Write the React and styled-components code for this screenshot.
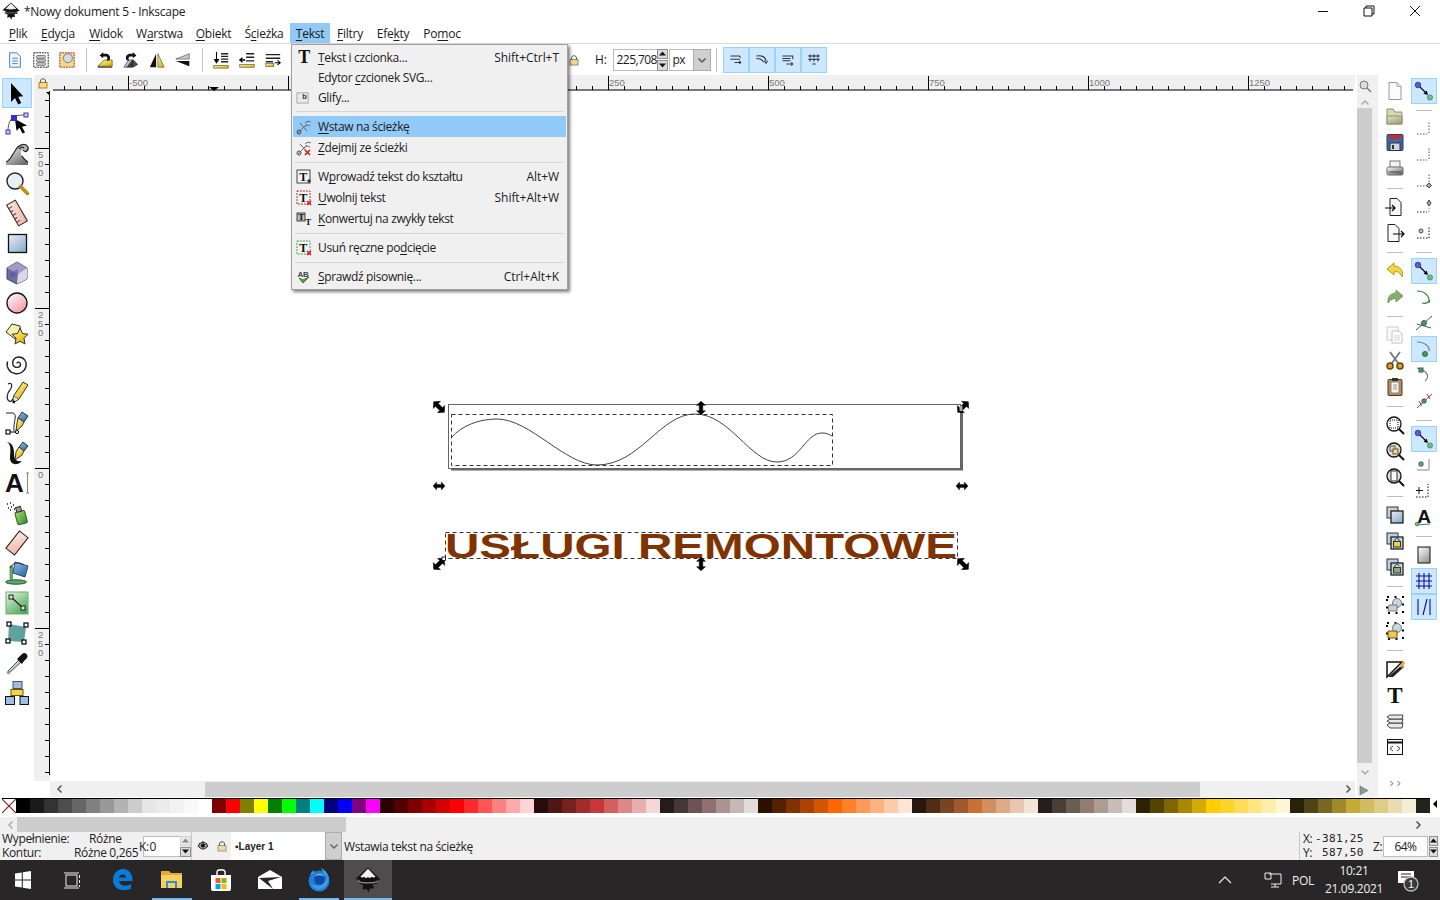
import React from "react";
import styled, { createGlobalStyle } from "styled-components";

const Global = createGlobalStyle`
  html, body { margin: 0; padding: 0; width: 1440px; height: 900px; overflow: hidden; background: #fff; }
  body { font-family: "Open Sans", "Noto Sans", sans-serif; font-size: 12px; color: #1a1a1a; }
  u { text-decoration-thickness: 1px; text-underline-offset: 2px; text-decoration-skip-ink: none; }
`;

/* ---------- layout ---------- */
const Window = styled.div`position: relative; width: 1440px; height: 900px; display: flex; flex-direction: column; overflow: hidden;`;
const TitleBar = styled.div`height: 22px; display: flex; align-items: center; padding-left: 2px; background: #fff;`;
const TitleText = styled.span`margin-left: 4px; letter-spacing: -0.26px; color: #222;`;
const WinControls = styled.div`margin-left: auto; display: flex; margin-right: 2px;`;
const WinControl = styled.div`width: 46px; height: 22px; display: flex; align-items: center; justify-content: center;`;
const MenuBar = styled.div`height: 21px; display: flex; padding-left: 2px; border-bottom: 1px solid #d9d9d9; background: #fff;`;
const MenuItem = styled.div`
  width: ${p => p.$w}px; height: 20px; margin-top: 1px; display: flex; align-items: center; justify-content: center;
  letter-spacing: -0.25px; background: ${p => (p.$open ? "#91c9f7" : "transparent")};
`;
const TopBar = styled.div`height: 31px; display: flex; align-items: center; padding-left: 2px; background: #fff;`;
const Btn = styled.div`
  width: ${p => p.$w || 26}px; height: ${p => p.$h || 26}px; flex: none; box-sizing: border-box;
  display: flex; align-items: center; justify-content: center;
  background: ${p => (p.$on ? "#cce8ff" : "transparent")};
  border: 1px solid ${p => (p.$on ? "#99d1ff" : "transparent")};
`;
const VSep = styled.div`width: 12px; height: 24px; flex: none; display: flex; justify-content: center; &::before { content: ""; width: 1px; background: #c4c4c4; }`;
const Gap = styled.div`width: ${p => p.$w}px; flex: none;`;
const FieldLabel = styled.span`letter-spacing: -0.2px; flex: none;`;
const NumField = styled.div`
  width: ${p => p.$w}px; height: ${p => p.$h || 22}px; flex: none; box-sizing: border-box; background: #fff; border: 1px solid #bdbdbd; border-right: ${p => (p.$open ? "0" : "1px solid #bdbdbd")};
  display: flex; align-items: center; justify-content: ${p => (p.$center ? "center" : "flex-start")}; padding-left: ${p => (p.$center ? 0 : 3)}px; letter-spacing: -0.6px; white-space: pre;
`;
const Spin = styled.div`width: ${p => p.$w || 11}px; height: ${p => p.$h || 22}px; flex: none; display: flex; flex-direction: column; gap: 1px;`;
const SpinPart = styled.div`flex: 1; background: ${p => (p.$dim ? "#e6e6e6" : "#dcdcdc")}; border: 1px solid ${p => (p.$dim ? "#d4d4d4" : "#8f8f8f")}; display: flex; align-items: center; justify-content: center;`;
const ComboArrow = styled.div`width: ${p => p.$w}px; height: ${p => p.$h}px; flex: none; box-sizing: border-box; background: #cfcfcf; border: 1px solid #adadad; display: flex; align-items: center; justify-content: center;`;

const Workspace = styled.div`height: 722px; display: flex; background: #fff;`;
const LeftTools = styled.div`width: 34px; flex: none; padding: 3px 0 0 2px; box-sizing: border-box; display: flex; flex-direction: column;`;
const Center = styled.div`
  width: 1344px; flex: none; box-sizing: border-box; border-right: 1px solid #b4b4b4; display: grid;
  grid-template-columns: 16px 1305px 23px; grid-template-rows: 16px 690px 16px;
`;
const Corner = styled.div`background: #f0f0f0; display: flex; align-items: flex-start; justify-content: flex-end; padding: 2px 1px 0 0;`;
const RulerTop = styled.div`background: #f0f0f0; height: 16px; overflow: hidden;`;
const RulerLeft = styled.div`background: #f0f0f0; width: 16px; overflow: hidden;`;
const Canvas = styled.div`background: #fff; height: 690px; overflow: hidden;`;
const VScroll = styled.div`grid-row: 1 / span 2; grid-column: 3; background: #f0f0f0; margin-left: 2px; display: flex; flex-direction: column; align-items: stretch;`;
const VScrollEnd = styled.div`height: ${p => p.$h}px; flex: none; width: 15px; display: flex; align-items: center; justify-content: center;`;
const VThumb = styled.div`width: 15px; height: 655px; flex: none; background: #cdcdcd;`;
const BottomLeft = styled.div`background: #fff;`;
const HScroll = styled.div`display: flex; align-items: center; background: #f0f0f0; grid-column: 2;`;
const HThumb = styled.div`width: ${p => p.$w}px; height: ${p => p.$h || 15}px; margin-left: ${p => p.$l}px; background: #cdcdcd; flex: none;`;
const Arrow = styled.div`width: ${p => p.$w || 10}px; margin-left: ${p => p.$l || 0}px; flex: none; display: flex; align-items: center; justify-content: center;`;
const CornerBR = styled.div`background: #f0f0f0; margin-left: 2px; display: flex; align-items: flex-end; padding: 0 0 1px 2px;`;
const RightBars = styled.div`flex: 1; display: flex;`;
const CmdBar = styled.div`width: 33px; flex: none; padding-top: 3px; display: flex; flex-direction: column; align-items: center;`;
const SnapBar = styled.div`width: 26px; flex: none; padding-top: 3px; display: flex; flex-direction: column;`;
const HSep = styled.div`height: 12px; flex: none; display: flex; align-items: center; justify-content: center; &::before { content: ""; width: 16px; height: 1px; background: #bdbdbd; }`;
const More = styled.div`height: 24px; margin-top: 11px; display: flex; align-items: center; justify-content: center;`;

const PaletteRow = styled.div`height: 20px; flex: none; box-sizing: border-box; padding: 1px 0 0 2px; background: #fff; display: flex; align-items: flex-start;`;
const Swatches = styled.div`display: flex; border-top: 1px solid #000;`;
const Swatch = styled.div`width: 14px; height: 14px; background: ${p => p.$c};`;
const NoneSwatch = styled.div`width: 14px; height: 14px; overflow: hidden; display: flex;`;
const PaletteMenu = styled.div`margin: 2px 0 0 0; width: 10px; display: flex; justify-content: center;`;
const PaletteScroll = styled.div`height: 15px; flex: none; background: #f0f0f0; display: flex; align-items: center; padding-left: 4px;`;

const Status = styled.div`height: 28px; flex: none; background: #f0f0f0; display: flex; align-items: center; letter-spacing: -0.35px; font-size: 12px; color: #222;`;
const FillInfo = styled.div`width: 139px; flex: none; padding-left: 2px; box-sizing: border-box; display: grid; grid-template-columns: 72px 1fr; line-height: 14px; white-space: nowrap;`;
const FirstValue = styled.span`padding-left: 15px;`;
const OpacityLabel = styled.span`width: 4px; flex: none; position: relative; z-index: 1; overflow: visible; white-space: nowrap;`;
const StatusSep = styled.div`width: 1px; height: 28px; background: #c8c8c8; flex: none;`;
const StatusIcon = styled.div`width: ${p => p.$w}px; flex: none; display: flex; justify-content: center;`;
const LayerBox = styled.div`width: 94px; height: 28px; flex: none; background: #fff; box-sizing: border-box; padding-left: 4px; display: flex; align-items: center; font: bold 10px "Liberation Sans", sans-serif; letter-spacing: 0;`;
const Message = styled.span`margin-left: 2px;`;
const Coords = styled.div`margin-left: auto; width: 74px; flex: none; padding-left: 3px; box-sizing: border-box; border-left: 1px solid #c8c8c8; height: 28px; display: flex; flex-direction: column; justify-content: center;`;
const CoordRow = styled.div`display: flex; white-space: pre; height: 14px; line-height: 14px;`;
const CoordKey = styled.span`width: 12px; flex: none;`;
const CoordVal = styled.span`font-family: "DejaVu Sans Mono", monospace; font-size: 11px; line-height: 14px; letter-spacing: 0.35px;`;
const ZoomLabel = styled.span`width: 10px; flex: none;`;
const EndPad = styled.div`width: 2px; flex: none;`;

const Taskbar = styled.div`height: 40px; flex: none; background: #282627; display: flex; color: #eee;`;
const TaskBtn = styled.div`
  width: 48px; height: 40px; flex: none; position: relative; margin-left: ${p => p.$ml || 0}px; display: flex; align-items: center; justify-content: center;
  background: ${p => (p.$active ? "#4e4c4d" : "transparent")};
  ${p => p.$run && `&::after { content: ""; position: absolute; bottom: 0; height: 2px; left: ${p.$active ? 0 : 4}px; right: ${p.$active ? 0 : 4}px; background: #76b9ed; }`}
`;
const Tray = styled.div`margin-left: auto; display: flex; align-items: center; height: 40px; color: #f0f0f0; font-size: 12px;`;
const TrayItem = styled.div`width: ${p => p.$w}px; flex: none; display: flex; align-items: center; justify-content: center; letter-spacing: -0.2px;`;
const Clock = styled.div`width: 82px; flex: none; display: flex; flex-direction: column; align-items: center; line-height: 18px; letter-spacing: -0.3px;`;

const DropMenu = styled.div`
  position: absolute; left: 291px; top: 44px; width: 277px; height: 246px; box-sizing: border-box; z-index: 5; background: #f0f0f0;
  border: 1px solid #a0a0a0; padding: 2px 1px; box-shadow: 2px 2px 3px rgba(0,0,0,.5); letter-spacing: -0.36px; color: #1c1c1c;
`;
const MenuRow = styled.div`height: ${p => p.$h}px; display: flex; align-items: center; background: ${p => (p.$hot ? "#91c9f7" : "transparent")};`;
const MenuIcon = styled.div`width: 25px; padding-left: 3px; box-sizing: border-box; flex: none; display: flex; align-items: center; justify-content: flex-start;`;
const MenuLabel = styled.span`flex: 1; white-space: nowrap;`;
const MenuKey = styled.span`margin-right: 7px; white-space: nowrap; letter-spacing: -0.05px;`;
const MenuSep = styled.div`height: ${p => p.$h}px; display: flex; align-items: center; padding: 0 2px; &::before { content: ""; flex: 1; height: 1px; background: #d7d7d7; }`;
const IconSvg = styled.svg`width: ${p => p.$s}px; height: ${p => p.$s}px; flex: none; display: block; overflow: visible;`;
const HiddenDefs = styled.svg`position: absolute; width: 0; height: 0;`;
const FlatSvg = styled.svg`display: block; flex: none;`;

/* ---------- icons ---------- */
const I = ({ s = 20, v = 20, children }) => <IconSvg $s={s} viewBox={`0 0 ${v} ${v}`}>{children}</IconSvg>;
const SANS = "Liberation Sans, sans-serif";
const SERIF = "Liberation Serif, serif";

const Defs = () => (
  <HiddenDefs>
    <defs>
      {[
        ["gBlue", "#e9f0f6", "#8eb0cd"], ["gPink", "#ffffff", "#f49aaa"], ["gYel", "#fff7a0", "#e2b400"],
        ["gGreen", "#eaf7e6", "#4ea85a"], ["gGray", "#ffffff", "#6e6e6e"], ["gSalmon", "#fdeae4", "#f3b9ab"],
        ["gBucket", "#8fc0e6", "#2f6ea6"], ["gBottle", "#a8dc70", "#3f9a35"], ["gOrange", "#ffd27a", "#c8781c"],
        ["gPage", "#ffffff", "#9a9a9a"], ["gFolder", "#e3e6c2", "#9ea27a"],
      ].map(([id, a, b]) => (
        <linearGradient key={id} id={id} x1="0" y1="0" x2="0.7" y2="1"><stop offset="0" stopColor={a} /><stop offset="1" stopColor={b} /></linearGradient>
      ))}
    </defs>
  </HiddenDefs>
);

const Tools = {
  select: <path d="M6 2v19l4-4 3.200 6.500 3-1.500-3-6.200 5-.5z" fill="#000" />,
  node: <><path d="M3 20C3 12 6 7 9 6c3-2 7-2 11-2" fill="none" stroke="#555" /><path d="M10 8l12 6.500-5 1.200 3 5.800-2.500 1-3-5.800-3 3z" fill="#000" /><rect x="1" y="19" width="4" height="4" fill="#cfcff5" stroke="#3434c0" /><rect x="6.500" y="4.500" width="5" height="5" fill="#3434c0" stroke="#3434c0" /><rect x="19" y="2" width="4" height="4" fill="#cfcff5" stroke="#3434c0" /></>,
  tweak: <><path d="M1 24v-3c4-1 6-7 9-11 3-6 10-9 13-4 1 4-3 6-5 3-2 0-3 3-1 6 2 4 5 5 6 6v3z" fill="url(#gGray)" /><path d="M1 21c4-1 6-7 9-11 3-6 10-9 13-4 1 4-3 6-5 3M14 8c2-2 4-2 5-1M17 15c2 4 5 5 6 6" fill="none" stroke="#222" strokeWidth="1.200" /></>,
  zoom: <><circle cx="10" cy="10" r="8" fill="#e8f0f6" stroke="#222" strokeWidth="1.400" /><path d="M15.500 15.500l7 7" stroke="#c98a16" strokeWidth="3.600" strokeLinecap="round" /></>,
  measure: <g transform="rotate(-30 12 12)"><rect x="7" y="0" width="10" height="24" fill="url(#gSalmon)" stroke="#222" /><path d="M7 4h4M7 8h3M7 12h4M7 16h3M7 20h4" stroke="#444" /></g>,
  rect: <rect x="3.500" y="3.500" width="18" height="18" fill="url(#gBlue)" stroke="#111" strokeWidth="1.300" />,
  box: <><path d="M12 1l10 6v11l-10 5-10-5V7z" fill="#6d6da8" stroke="#444" /><path d="M12 1l10 6-9 6-11-6z" fill="#9d9dc8" /><path d="M13 13l9-6v11l-10 5z" fill="#d8d8ea" /><path d="M5 17l8-4v-5l-8 4z" fill="#55558f" opacity=".5" /></>,
  circle: <circle cx="12" cy="12" r="10" fill="url(#gPink)" stroke="#111" strokeWidth="1.300" />,
  star: <><path d="M1 11l6-8 8 2 1 7-6 6z" fill="#f7f1b0" stroke="#333" /><path d="M15 7l2.500 5.500 5.500.7-4 4 1 5.800-5-2.800-5 2.800 1-5.800-4-4 5.500-.7z" fill="url(#gYel)" stroke="#333" /></>,
  spiral: <path d="M12 12.500c0-2 3.500-2 3.500 1 0 3.500-6 4-7.500.5-1.500-4 1.500-8 5.500-8 5.500 0 8.500 4.500 7.500 9.500-1 5-6 8-11 7-5.500-1-9-6-7.500-12" fill="none" stroke="#222" strokeWidth="1.400" />,
  pencil: <><path d="M3 3c4-2 5 2 2 6-3 3-4 9-1 11 3 2 3-3 5-2 1 1-1 4 1 4" fill="none" stroke="#222" strokeWidth="1.200" /><path d="M18 1l5 3-9 14-6 4 .5-7z" fill="url(#gYel)" stroke="#333" /><path d="M8.500 15l-.5 7 6-4z" fill="#f4e0c0" stroke="#333" strokeWidth=".6" /><path d="M8.200 19l-.2 3 2.500-1.600z" fill="#000" /></>,
  pen: <><path d="M1 2h7c5 2 0 9 1 18" fill="none" stroke="#222" /><rect x="1" y="19" width="4" height="4" fill="#fff" stroke="#000" strokeWidth="1.100" /><path d="M5 21h6" stroke="#000" /><circle cx="12" cy="21" r="1.600" fill="#fff" stroke="#000" /><path d="M17 1l6 4-4 6-6-4z" fill="url(#gBucket)" stroke="#333" /><path d="M13 7l6 4-2 4-6 5 1-8z" fill="url(#gYel)" stroke="#333" /></>,
  calli: <><path d="M2 1c5 3 3 11 3 17 1 6 7 7 12 2-6 1-8-2-8-8 0-6-2-10-7-11z" fill="#111" /><path d="M18 1l5 4-4 5-5-4z" fill="url(#gBucket)" stroke="#333" /><path d="M14 6l5 4-2 4-7 5 1-8z" fill="url(#gYel)" stroke="#333" /></>,
  text: <><text x="0" y="21" fontFamily={SANS} fontWeight="700" fontSize="26" fill="#111">A</text><path d="M21 2h3M22.500 2v20M21 22h3" stroke="#666" strokeWidth=".8" fill="none" /></>,
  spray: <><rect x="11" y="10" width="10" height="13" rx="2" fill="url(#gBottle)" stroke="#2d5d22" transform="rotate(-15 16 16)" /><rect x="11" y="6" width="5" height="5" fill="#999" stroke="#333" transform="rotate(-15 13 8)" /><path d="M2 3h1M5 2h1M8 4h1M3 7h1M6 6h1M9 8h1M5 9h1" stroke="#111" strokeWidth="1.600" /></>,
  eraser: <g transform="rotate(38 12 12)"><rect x="6.500" y="1" width="11" height="22" fill="url(#gSalmon)" stroke="#222" /></g>,
  bucket: <><ellipse cx="11" cy="21" rx="10.500" ry="2.200" fill="#5ca86a" stroke="#27552f" /><path d="M5 5h2.500v12c0 3-2.500 3-2.500 0z" fill="#5fb06a" stroke="#27552f" strokeWidth=".5" /><path d="M10 1l13 4-3 11-12-4z" fill="url(#gBucket)" stroke="#274f74" /><path d="M5 7c2-5 9-7 14-3" fill="none" stroke="#333" /></>,
  gradient: <><rect x="1" y="1" width="22" height="22" fill="url(#gGreen)" stroke="#63b56f" /><path d="M6 6l12 11" stroke="#222" strokeWidth="1.200" /><rect x="4" y="4" width="4" height="4" fill="#ddd" stroke="#222" /><rect x="16" y="15" width="4" height="4" fill="#ddd" stroke="#222" /></>,
  mesh: <><path d="M4 3l17 3-2 15-16-1z" fill="#5fa39c" /><g fill="#fff" stroke="#000" strokeWidth="1.200"><rect x="2" y="1" width="4" height="4" /><rect x="19" y="2" width="4" height="4" /><rect x="1" y="18" width="4" height="4" /><rect x="17" y="19" width="4" height="4" /></g></>,
  dropper: <><path d="M4 22l-1-2 11-11 2 2z" fill="#cfd8dd" stroke="#444" /><path d="M12 8l5 5 2-3 3-3c2-3-2-7-5-4l-3 3z" fill="#111" /><circle cx="3.500" cy="21.500" r="1.800" fill="#999" /></>,
  conn: <><path d="M12 9V6M7 19v-5h10v5" fill="none" stroke="#222" /><rect x="8" y="0.500" width="9" height="7" fill="#9fbde0" stroke="#456" /><rect x="6" y="8.500" width="12" height="6" fill="#f6d34a" stroke="#6a5a10" /><rect x="0.500" y="15.500" width="9" height="8" fill="#9fbde0" stroke="#111" /><rect x="15" y="15.500" width="8.500" height="8" fill="#9fbde0" stroke="#111" /></>,
};

const Top = {
  doc: <><path d="M4 2h8l4 4v12H4z" fill="#eef5fb" stroke="#3f78ae" /><path d="M7 8h6M7 11h6M7 14h6" stroke="#3f78ae" /></>,
  selAll: <><rect x="2" y="2" width="16" height="16" fill="none" stroke="#000" strokeDasharray="2 1" /><g fill="#c9c9c9" stroke="#555" strokeWidth=".8"><rect x="5" y="5" width="10" height="3" rx="1" /><rect x="5" y="9" width="10" height="3" rx="1" /><rect x="5" y="13" width="10" height="3" rx="1" /></g></>,
  invert: <><rect x="2" y="2" width="16" height="16" fill="#f5d98a" stroke="#a01818" strokeDasharray="2 1" /><circle cx="11" cy="8" r="5" fill="#cfdcea" stroke="#777" /></>,
  rotL: <><path d="M2 17l7-7h9v7z" fill="url(#gYel)" stroke="#222" strokeWidth=".6" /><path d="M8 1L4 5l4 3V6h3c2 0 2 3 1 5l3-1c2-4-1-7-4-7H8z" fill="#111" /><path d="M2 18h16" stroke="#111" /></>,
  rotR: <><path d="M2 18l5-8h5v8z" fill="#b8bdc3" stroke="#222" strokeWidth=".6" /><path d="M5 18h8l5-3-6-6z" fill="#111" opacity=".75" /><path d="M12 1l4 4-4 3V6H9C7 6 7 9 8 11l-3-1C3 6 6 3 9 3h3z" fill="#111" /></>,
  flipH: <><path d="M9 3v15H2z" fill="#111" /><path d="M11 3v15h7z" fill="url(#gYel)" stroke="#333" strokeWidth=".6" /></>,
  flipV: <><path d="M17 3v6H2z" fill="#c7c7c7" stroke="#333" strokeWidth=".6" /><path d="M17 11v6L2 11z" fill="#111" /></>,
  raiseTop: <><rect x="2" y="16" width="16" height="3" fill="url(#gYel)" stroke="#333" strokeWidth=".6" /><path d="M5 1v10M2.500 9l2.500 4 2.500-4" stroke="#000" fill="#000" strokeWidth="1.200" /><path d="M10 3h8M10 6h8M10 9h8M10 12h8" stroke="#222" strokeWidth="1.600" /></>,
  raise: <><rect x="2" y="15" width="16" height="3" fill="url(#gYel)" stroke="#333" strokeWidth=".6" /><path d="M2 10h6M5 7.500L2 10l3 2.500" stroke="#000" fill="none" strokeWidth="1.400" /><path d="M9 3h9M9 7h9M9 11h9" stroke="#222" strokeWidth="1.600" /></>,
  lower: <><path d="M2 4h16M2 8h16M2 12h8" stroke="#222" strokeWidth="1.600" /><rect x="2" y="14" width="9" height="3" fill="url(#gYel)" stroke="#333" strokeWidth=".6" /><path d="M12 13h6M15 10.500l3 2.500-3 2.500" stroke="#000" fill="none" strokeWidth="1.200" /></>,
};

const Cmd = {
  new: <><path d="M4 1.500h8l4 4v13H4z" fill="#fbfbfb" stroke="#999" /><path d="M12 1.500v4h4" fill="#e0e0e0" stroke="#aaa" /></>,
  open: <><path d="M2 5V2h6l2 3h7v12H2z" fill="#d6d9b0" stroke="#8f9272" /><path d="M2 9h15v8H2z" fill="url(#gFolder)" stroke="#8f9272" /></>,
  save: <><rect x="2" y="1.500" width="16" height="16" rx="1" fill="#3a68b0" stroke="#25406d" /><rect x="4" y="2" width="12" height="4" fill="#c92c2c" /><rect x="5" y="10" width="10" height="7.500" fill="#d5d5d5" stroke="#333" /><rect x="7" y="12" width="2" height="4" fill="#333" /></>,
  print: <><rect x="5" y="2" width="10" height="7" fill="#f2f2f2" stroke="#777" /><rect x="2" y="8" width="16" height="8" rx="1.500" fill="url(#gGray)" stroke="#666" /><path d="M4 13h12" stroke="#444" /></>,
  import: <><path d="M5 1.500h7l4 4v13H5z" fill="#fafafa" stroke="#222" /><path d="M0 11h10M7 8l3 3-3 3" stroke="#000" fill="none" strokeWidth="1.200" /></>,
  export: <><path d="M3 1.500h7l4 4v13H3z" fill="#fafafa" stroke="#222" /><path d="M8 11h11M16 8l3 3-3 3" stroke="#000" fill="none" strokeWidth="1.200" /></>,
  undo: <path d="M9 2L2 8l7 6v-3c3-1 6 0 8 5 2-6-2-11-8-11z" fill="#f3d545" stroke="#b99a10" />,
  redo: <path d="M11 3l7 6-7 6v-3C8 11 5 13 3 16 2 10 6 6 11 6z" fill="#86ae6d" stroke="#5d8b4a" strokeDasharray="1.500 .6" />,
  copy: <g opacity=".5"><rect x="2" y="2" width="11" height="13" fill="#f4f4f4" stroke="#999" /><path d="M7 6h7l3 3v9H7z" fill="#fff" stroke="#888" /><path d="M9 11h6M9 13h6M9 15h6" stroke="#aaa" /></g>,
  cut: <><path d="M5 1l8 11M15 1L7 12" stroke="#777" strokeWidth="1.800" /><circle cx="5" cy="15" r="3" fill="#d8a030" stroke="#6a4608" strokeWidth="1.500" /><circle cx="15" cy="15" r="3" fill="#d8a030" stroke="#6a4608" strokeWidth="1.500" /></>,
  paste: <><rect x="3" y="2.500" width="14" height="16" rx="1" fill="#b98c52" stroke="#52361a" /><path d="M6 5h8v11H6z" fill="#f5f5f5" stroke="#888" /><rect x="7" y="1" width="6" height="3" fill="#333" /><path d="M8 8h4M8 10h4M8 12h4" stroke="#999" /></>,
  zoomSel: <><circle cx="9" cy="9" r="7" fill="#fff" stroke="#111" strokeWidth="1.300" /><rect x="5" y="5" width="8" height="8" fill="none" stroke="#111" strokeDasharray="1 1" /><path d="M14 14l5 5" stroke="#111" strokeWidth="2" /></>,
  zoomDraw: <><circle cx="9" cy="9" r="7" fill="#ddd" stroke="#111" strokeWidth="1.300" /><rect x="5" y="5" width="5" height="5" fill="#f4d98a" stroke="#555" /><rect x="8" y="8" width="5" height="5" fill="#f4d98a" stroke="#555" /><path d="M14 14l5 5" stroke="#111" strokeWidth="2" /></>,
  zoomPage: <><circle cx="9" cy="9" r="7" fill="#ddd" stroke="#111" strokeWidth="1.300" /><rect x="6" y="4" width="6" height="10" fill="#fafafa" stroke="#333" /><path d="M14 14l5 5" stroke="#111" strokeWidth="2" /></>,
  dup: <><rect x="2" y="2" width="11" height="11" fill="#bcd0e2" stroke="#333" /><rect x="6" y="6" width="12" height="12" fill="url(#gBlue)" stroke="#111" strokeWidth="1.200" /></>,
  clone: <><rect x="2" y="2" width="11" height="11" fill="#bcd0e2" stroke="#333" /><rect x="6" y="6" width="12" height="12" fill="#c3d4e4" stroke="#111" strokeWidth="1.200" /><rect x="8.500" y="10.500" width="7" height="5.500" fill="#f2d23a" stroke="#333" /><path d="M10 10.500V9c0-2 4-2 4 0v1.500" fill="none" stroke="#333" /></>,
  unlink: <><rect x="2" y="2" width="11" height="11" fill="#bcd0e2" stroke="#333" /><rect x="6" y="6" width="12" height="12" fill="#c3d4e4" stroke="#111" strokeWidth="1.200" /><rect x="8.500" y="10.500" width="7" height="5.500" fill="#7fb070" stroke="#333" /><path d="M10 10.500V9c0-2 4-2 4 0" fill="none" stroke="#333" /></>,
  group: <><rect x="2" y="2" width="16" height="16" fill="none" stroke="#000" strokeWidth="2" strokeDasharray="2 5.500" /><circle cx="12" cy="8" r="4.500" fill="#c8d6e2" stroke="#777" /><path d="M3 16l1-6h8v6z" fill="#c6d2dc" stroke="#777" /></>,
  ungroup: <><rect x="2" y="2" width="16" height="16" fill="none" stroke="#000" strokeWidth="2" strokeDasharray="2 5.500" /><circle cx="12" cy="7" r="4.500" fill="#c8d6e2" stroke="#777" /><path d="M3 17V10h9v7z" fill="#f4c93a" stroke="#555" /></>,
  fill: <><path d="M2 18V3h15L2 18z" fill="#fff" stroke="#111" strokeWidth="1.500" /><path d="M3 18L17 6l2 2L8 18z" fill="#222" /><path d="M14 7l4-5 2 2-3 5z" fill="#e4a630" /></>,
  t: <text x="10" y="18" textAnchor="middle" fontFamily={SERIF} fontWeight="700" fontSize="23" fill="#111">T</text>,
  layers: <g fill="#e8e8e8" stroke="#333" strokeWidth=".9"><path d="M2 14l3-2h13l-1 5H5z" /><path d="M2 10l3-2h13l-1 4H5z" /><path d="M2 6l3-2h13l-1 4H5z" /></g>,
  xml: <><rect x="2.500" y="2.500" width="15" height="15" fill="#fafafa" stroke="#111" /><path d="M2.500 5.500h15" stroke="#111" strokeWidth="2" /><path d="M8 9l-3 2.500 3 2.500M12 9l3 2.500-3 2.500" fill="none" stroke="#444" /></>,
};

const N = ({ x, y, c, r = 2 }) => <circle cx={x} cy={y} r={r} fill={c} stroke={c === "#5b5bd0" ? "#2f2fa0" : "#3d8a5c"} strokeWidth=".8" />;
const DashL = <path d="M3 15h10M15 14V2" stroke="#555" strokeDasharray="1.500 1.500" fill="none" />;
const Snap = {
  on: <><path d="M6 6l7 7" stroke="#000" strokeWidth="1.100" /><path d="M14 14l-4.500-1.200 3.200-3.200z" fill="#000" /><N x={4} y={4} c="#5b5bd0" r={2.800} /><N x={16} y={16.500} c="#78b890" r={2.600} /></>,
  a: <>{DashL}</>,
  b: <>{DashL}<path d="M15 12l2.500 2.500L15 17l-2.500-2.500z" fill="#aaa" stroke="#444" /></>,
  c: <><path d="M3 15h10" stroke="#111" strokeDasharray="1.500 1.500" /><path d="M15 15V9" stroke="#888" strokeDasharray="1.500 1.500" /><path d="M15 3l2 3-2 3-2-3z" fill="#aaa" stroke="#444" /></>,
  d: <><path d="M3 15h12V4" stroke="#111" strokeDasharray="1.500 1.500" fill="none" /><circle cx="7" cy="8" r="2" fill="#ccc" stroke="#444" /></>,
  curve: <><path d="M3 4c8 0 13 5 12 12" fill="none" stroke="#2e7d32" strokeWidth="1.200" /><path d="M8 16c3 1 6 0 8-3" fill="none" stroke="#2e7d32" strokeWidth="1.200" /></>,
  cross: <><path d="M2 17L18 3" stroke="#555" /><path d="M3 11l14 4" stroke="#555" /><circle cx="10" cy="10" r="2.500" fill="#4c9a63" stroke="#2d6a3f" /></>,
  smooth: <><path d="M3 3c9 0 13 6 12 9" fill="none" stroke="#777" strokeWidth="1.200" /><circle cx="11" cy="15" r="2.500" fill="#4c9a63" stroke="#2d6a3f" /></>,
  mid: <><path d="M3 3c9 2 14 8 8 13" fill="none" stroke="#777" strokeWidth="1.200" /><rect x="5" y="3" width="4" height="4" fill="#4c9a63" stroke="#2d6a3f" /></>,
  mask: <><path d="M3 17L18 3" stroke="#b03030" /><path d="M5 10l3 5M13 3l3 5" stroke="#b03030" /><circle cx="10" cy="10" r="2.200" fill="#4c9a63" stroke="#2d6a3f" /></>,
  center: <><path d="M3 15h12V4" stroke="#888" fill="none" /><rect x="5" y="7" width="4" height="4" rx="1" fill="#6eae82" stroke="#2d6a3f" /></>,
  plus: <><path d="M5 6v7M2 9.500h7" stroke="#111" /><path d="M2 16h12V3" stroke="#111" strokeDasharray="1.500 1.500" fill="none" /></>,
  txt: <><text x="10" y="16" textAnchor="middle" fontFamily={SANS} fontWeight="700" fontSize="19" fill="#111">A</text><path d="M2 18l14-1" stroke="#3d8a5c" /><circle cx="3" cy="17" r="1.800" fill="#78b890" stroke="#3d8a5c" /></>,
  page: <rect x="4" y="2" width="12" height="16" fill="url(#gPage)" stroke="#111" />,
  grid: <path d="M5 2v16M10 2v16M15 2v16M2 5h16M2 10h16M2 15h16" stroke="#0a0ab0" strokeWidth="1.100" />,
  guide: <path d="M4 2v16M9 18l4-16M16 2v16" stroke="#0a0ab0" strokeWidth="1.100" />,
};

const TIcon = ({ c, children }) => (
  <I s={16} v={16}>
    <rect x="1" y="1" width="13" height="13" fill="#f4f4f4" stroke={c} strokeDasharray={c === "#444" ? "0" : "2 1"} />
    <text x="7" y="12" textAnchor="middle" fontFamily={SERIF} fontWeight="700" fontSize="12" fill="#111">T</text>
    {children}
  </I>
);
const RedX = <path d="M11 11l4 4M15 11l-4 4" stroke="#d02020" strokeWidth="1.600" />;
const Scis = ({ x }) => (
  <I s={16} v={16}>
    <path d="M2 14L11 5M4 4l7 8" stroke="#666" fill="none" /><circle cx="3" cy="13" r="2" fill="none" stroke="#444" />
    <path d="M9 4c2-2 4-2 6-1M9 7c2-1 3-1 5 0" fill="none" stroke="#666" />
    {x && <path d="M9 10l5 5M14 10l-5 5" stroke="#d02020" strokeWidth="1.700" />}
  </I>
);

const Chev = ({ d = "left", c = "#8a8a8a", s = 10 }) => {
  const rot = { left: 0, up: 90, right: 180, down: 270 }[d];
  return <I s={s} v={10}><path d="M6.500 1.500L3 5l3.500 3.500" fill="none" stroke={c} strokeWidth="1.500" transform={`rotate(${rot} 5 5)`} /></I>;
};
const Tri = ({ up, c = "#111" }) => <I s={7} v={7}><path d={up ? "M3.500 1.500L7 5.500H0z" : "M3.500 5.500L7 1.500H0z"} fill={c} /></I>;
const Lock = ({ c = "#b98016" }) => <I s={12} v={12}><rect x="2" y="5.500" width="8" height="5.500" fill="#f6d98a" stroke={c} /><path d="M3.500 5.500V4c0-3 5-3 5 0v1.500" fill="none" stroke="#555" /></I>;

/* ---------- rulers ---------- */
const RulerH = () => {
  let d = "M3 15H1303";
  for (let x = 128 - 16 * 4; x < 1353; x += 16) {
    const px = x - 50;
    d += ((x - 128) % 160 === 0 ? ` M${px + 0.5} 1V15` : ` M${px + 0.5} 11V15`);
  }
  const labels = [[128, "-500"], [768, "500"], [608, "250"], [928, "750"], [1088, "1000"], [1248, "1250"]];
  return (
    <FlatSvg width="1305" height="16">
      <path d={d} stroke="#000" strokeWidth="1" fill="none" />
      <path d="M159 12h10l-5 4z" fill="#000" />
      {labels.map(([x, t]) => <text key={t} x={x - 49} y={11} fontFamily={SANS} fontSize="9.500" fill="#777">{t}</text>)}
    </FlatSvg>
  );
};
const RulerV = () => {
  let d = "M15.500 0V684";
  for (let y = 148 - 16 * 3; y < 775; y += 16) {
    const py = y - 91;
    d += ((y - 148) % 160 === 0 ? ` M1 ${py + 0.5}H15` : ` M11 ${py + 0.5}H15`);
  }
  const digits = [[57, "500"], [217, "250"], [377, "0"], [537, "250"]];
  return (
    <FlatSvg width="16" height="690">
      <path d={d} stroke="#000" strokeWidth="1" fill="none" />
      <path d="M12 1h5v5z" fill="#000" />
      {digits.map(([y, t]) => t.split("").map((ch, i) => <text key={y + "-" + i} x={4} y={y + 10 + i * 9} fontFamily={SANS} fontSize="9.500" fill="#777">{ch}</text>))}
    </FlatSvg>
  );
};

/* ---------- canvas ---------- */
const HANDLE = "M0-7.500L5-3H2V3H5L0 7.500-5 3H-2V-3H-5z";
const Handle = ({ x, y, a, sc = 1 }) => <path d={HANDLE} transform={`translate(${x} ${y}) rotate(${a}) scale(${sc})`} fill="#000" stroke="#000" strokeWidth=".5" />;
const Drawing = () => (
  <FlatSvg width="1305" height="690" viewBox="50 91 1305 690">
    <rect x="451" y="407" width="512" height="63.500" fill="#666" />
    <rect x="448.500" y="404.500" width="512" height="64" fill="#fff" stroke="#666" />
    <path d="M451 438C462 425 480 419 497 419C530 419 565 465 597 465C640 465 660 414 695 414C730 414 750 462 777 462C800 462 805 433 822 433C826 433 829 434 832 436" fill="none" stroke="#444" />
    <rect x="451.500" y="414.500" width="381" height="51" fill="none" stroke="#333" strokeDasharray="4 3" />
    <text x="445" y="558" textLength="512" lengthAdjust="spacingAndGlyphs" fontFamily={SANS} fontWeight="700" fontSize="35" fill="#803300">USŁUGI REMONTOWE</text>
    <rect x="445.500" y="532.500" width="512" height="26" fill="none" stroke="#333" strokeDasharray="4 3" />
    <Handle x={439} y={407} a={-45} /><Handle x={701} y={408} a={0} sc={.9} /><Handle x={963} y={407} a={45} />
    <Handle x={439} y={486} a={90} sc={.8} /><Handle x={962} y={486} a={90} sc={.8} />
    <Handle x={439} y={564} a={45} /><Handle x={701} y={564} a={0} sc={.9} /><Handle x={963} y={564} a={-45} />
    <rect x="442" y="557" width="3.500" height="3.500" fill="#fff" stroke="#000" strokeWidth=".8" />
    <rect x="959.500" y="406" width="3" height="5" fill="#aaa" />
  </FlatSvg>
);

/* ---------- taskbar art ---------- */
const InkPaths = (
  <>
    <path d="M12 0.500L23.500 11.500 20 12.500l1 3-4.500.5 1 3.500-4 .5-1 3.500-2-3.500-3.500 1 .5-4.500L3.500 15l1.500-3-4.500-1z" fill="#111" />
    <path d="M12 1.500L19 9c-1.500 1-3 .5-4 0-1 1.500-2 1.500-3 0-1 1.500-2.500 1.500-3.500 0-1 .5-2 1-3.500 0z" fill="#f4f4f4" />
    <path d="M3 13.500c4 1.500 14 1.500 18 0" stroke="#8a8a8a" fill="none" />
  </>
);
const Art = {
  win: <path d="M0 2.500l6.800-1v7H0zM7.800 1.300L16 0v8.500H7.800zM0 9.500h6.800v7L0 15.500zM7.800 9.500H16V18l-8.200-1.200z" fill="#fff" />,
  task: <><rect x="2" y="3" width="11" height="11" fill="none" stroke="#eee" /><path d="M0 1h15M0 16h15M15.500 3v3M15.500 8v3M15.500 13v2" stroke="#eee" /></>,
  edge: <path d="M2 12C2 5 7 1 12 1c6 0 10 5 9.500 12H8c.5 5 7 6 12 3v4.500c-7 3.500-18 1.500-18-8.500zm6-2.500h7c0-4-6.500-4-7 0z" fill="#0a7cd8" fillRule="evenodd" />,
  folder: <><path d="M1 3h8l2 2h11v15H1z" fill="#e8a93c" /><path d="M1 7h21v13H1z" fill="#f7d15b" /><rect x="6" y="13" width="11" height="7" fill="#2e8fd6" /><rect x="8" y="15" width="7" height="5" fill="#f7d15b" /></>,
  store: <><path d="M2 7h20v14a2 2 0 0 1-2 2H4a2 2 0 0 1-2-2z" fill="#fff" /><path d="M8 7V4c0-3 8-3 8 0v3" fill="none" stroke="#fff" strokeWidth="1.400" /><rect x="6.500" y="10" width="5" height="5" fill="#f35325" /><rect x="12.500" y="10" width="5" height="5" fill="#81bc06" /><rect x="6.500" y="16" width="5" height="5" fill="#05a6f0" /><rect x="12.500" y="16" width="5" height="5" fill="#ffba08" /></>,
  mail: <><path d="M0 9L12 2l12 7v12H0z" fill="#fff" /><path d="M1 10l22-1-13 4 5 8z" fill="#282627" /></>,
  fox: <><circle cx="12" cy="13" r="10.500" fill="#1f7ed6" /><path d="M4 16c1 5 9 7 14 3 4-3 4-9 2-12 0 4-2 9-7 10-3 1-7 1-9-1z" fill="#3f9bea" /><circle cx="12.500" cy="11.500" r="5.200" fill="#0f4aa6" /><path d="M8 8c2-3 7-3 9 0-3-1-6-1-9 0z" fill="#70c0f6" /><path d="M14 0c4 2 8 6 8 12-1-3-3-5-5-6-1-2-2-4-3-6zM3 7c1-2 2-4 4-5-.5 2-.5 3 .5 4C5.500 6 4 6.500 3 7z" fill="#3aa0ee" /></>,
};

/* ---------- data ---------- */
const P = "#000 #1a1a1a #333 #4d4d4d #666 #808080 #999 #b3b3b3 #ccc #e6e6e6 #ececec #f2f2f2 #f9f9f9 #fff #800000 #f00 #808000 #ff0 #008000 #0f0 #008080 #0ff #000080 #00f #800080 #f0f #2b0000 #550000 #800000 #aa0000 #d40000 #f00 #ff2a2a #f55 #ff8080 #faa #ffd5d5 #280b0b #501616 #782121 #a02c2c #c83737 #d35f5f #de8787 #e9afaf #f4d7d7 #241c1c #483737 #6c5353 #916f6f #ac9393 #c8b7b7 #e3dbdb #2b1100 #552200 #803300 #a40 #d45500 #f60 #ff7f2a #f95 #ffb380 #fca #ffe6d5 #28170b #502d16 #784421 #a05a2c #c87137 #d38d5f #deaa87 #e9c6af #f4e3d7 #241f1c #483e37 #6c5d53 #917c6f #ac9d93 #c8beb7 #e3dedb #2b2200 #554400 #806600 #a80 #d4aa00 #fc0 #ffd42a #fd5 #ffe680 #fea #fff6d5 #28220b #504416 #786721 #a0892c #c8ab37 #d3bc5f #decd87 #e9ddaf #f4eed7 #24221c".split(" ");
const LEFT = ["select", "node", "tweak", "zoom", "measure", "rect", "box", "circle", "star", "spiral", "pencil", "pen", "calli", "text", "spray", "eraser", "bucket", "gradient", "mesh", "dropper", "conn"];
const CMD = ["new", "open", "save", "print", 0, "import", "export", 0, "undo", "redo", 0, "copy", "cut", "paste", 0, "zoomSel", "zoomDraw", "zoomPage", 0, "dup", "clone", "unlink", 0, "group", "ungroup", 0, "fill", "t", "layers", "xml"];
const SNAP = [["on", 1], 0, ["a"], ["a"], ["b"], ["c"], ["d"], 0, ["on", 1], ["curve"], ["cross"], ["smooth", 1], ["mid"], ["mask"], 0, ["on", 1], ["center"], ["plus"], ["txt"], 0, ["page"], ["grid", 1], ["guide", 1]];
const TOPS = [["doc", "selAll", "invert"], ["rotL", "rotR", "flipH", "flipV"], ["raiseTop", "raise", "lower"]];

const Row = ({ h = 21, icon, hot, children, k }) => (
  <MenuRow $h={h} $hot={hot}>
    <MenuIcon>{icon}</MenuIcon>
    <MenuLabel>{children}</MenuLabel>
    {k && <MenuKey>{k}</MenuKey>}
  </MenuRow>
);

export default function App() {
  return (
    <Window>
      <Global />
      <Defs />
      <TitleBar>
        <I s={18} v={24}>{InkPaths}</I>
        <TitleText>*Nowy dokument 5 - Inkscape</TitleText>
        <WinControls>
          <WinControl><I s={12} v={12}><path d="M1 6.500h10" stroke="#111" /></I></WinControl>
          <WinControl><I s={12} v={12}><path d="M3 3V1h8v8H9M1 3h8v8H1z" fill="none" stroke="#111" /></I></WinControl>
          <WinControl><I s={12} v={12}><path d="M1 1l10 10M11 1L1 11" stroke="#111" /></I></WinControl>
        </WinControls>
      </TitleBar>

      <MenuBar>
        <MenuItem $w={32}><u>P</u>lik</MenuItem>
        <MenuItem $w={48}><u>E</u>dycja</MenuItem>
        <MenuItem $w={48}><u>W</u>idok</MenuItem>
        <MenuItem $w={59}>W<u>a</u>rstwa</MenuItem>
        <MenuItem $w={49}><u>O</u>biekt</MenuItem>
        <MenuItem $w={52}>Ś<u>c</u>ieżka</MenuItem>
        <MenuItem $w={40} $open><u>T</u>ekst</MenuItem>
        <MenuItem $w={40}><u>F</u>iltry</MenuItem>
        <MenuItem $w={46}>Efe<u>k</u>ty</MenuItem>
        <MenuItem $w={52}>Po<u>m</u>oc</MenuItem>
      </MenuBar>

      <TopBar>
        {TOPS.map((g, i) => (
          <React.Fragment key={i}>
            {i > 0 && <VSep />}
            {g.map(n => <Btn key={n}><I s={18}>{Top[n]}</I></Btn>)}
          </React.Fragment>
        ))}
        <Gap $w={282} />
        <Lock c="#888" />
        <Gap $w={15} />
        <FieldLabel>H:</FieldLabel>
        <Gap $w={6} />
        <NumField $w={44} $open>225,708</NumField>
        <Spin><SpinPart><Tri up /></SpinPart><SpinPart><Tri /></SpinPart></Spin>
        <Gap $w={1} />
        <NumField $w={24} $open>px</NumField>
        <ComboArrow $w={18} $h={22}><Chev d="down" c="#555" /></ComboArrow>
        <VSep />
        <Btn $on><I s={16}><path d="M3 5h11l2 2M3 9h12M8 13h7M14 11l2 2-2 2" fill="none" stroke="#334" strokeWidth="1.300" /></I></Btn>
        <Btn $on><I s={16}><path d="M3 5c6-1 11 1 12 6M3 8c5 0 8 2 9 5M13 11l2 3 2-3" fill="none" stroke="#334" strokeWidth="1.300" /></I></Btn>
        <Btn $on><I s={16}><path d="M3 5h13v4M3 8h10M3 11h10M8 15h7M14 13l2 2-2 2" fill="none" stroke="#334" strokeWidth="1.300" /></I></Btn>
        <Btn $on><I s={16}><path d="M3 5h14M3 9h14M5 3v4M10 3v4M15 3v4M5 8v4M10 8v4M15 8v4M8 15h4" fill="none" stroke="#223" strokeWidth="1.300" /></I></Btn>
      </TopBar>

      <Workspace>
        <LeftTools>
          {LEFT.map((n, i) => <Btn key={n} $w={30} $h={30} $on={i === 0}><I s={24} v={24}>{Tools[n]}</I></Btn>)}
        </LeftTools>
        <Center>
          <Corner><Lock /></Corner>
          <RulerTop><RulerH /></RulerTop>
          <VScroll>
            <VScrollEnd $h={22}><I s={14} v={14}><circle cx="6" cy="6" r="4" fill="#ddd" stroke="#777" /><path d="M9 9l4 4" stroke="#777" strokeWidth="1.500" /></I></VScrollEnd>
            <VScrollEnd $h={11}><Chev d="up" c="#aaa" /></VScrollEnd>
            <VThumb />
            <VScrollEnd $h={18}><Chev d="down" c="#aaa" /></VScrollEnd>
          </VScroll>
          <RulerLeft><RulerV /></RulerLeft>
          <Canvas><Drawing /></Canvas>
          <BottomLeft />
          <HScroll>
            <Arrow $w={20}><Chev d="left" c="#555" /></Arrow>
            <HThumb $l={135} $w={995} />
            <Arrow $l={143}><Chev d="right" c="#555" /></Arrow>
          </HScroll>
          <CornerBR><I s={11} v={12}><path d="M1 1l9 5-9 5z" fill="#7f9f88" stroke="#556" strokeWidth=".7" strokeDasharray="1.500 .8" /></I></CornerBR>
        </Center>
        <RightBars>
          <CmdBar>
            {CMD.map((n, i) => (n === 0 ? <HSep key={i} /> : <Btn key={n} $h={26}><I s={20}>{Cmd[n]}</I></Btn>))}
            <More><Chev d="right" c="#8a8ab0" s={7} /><Chev d="right" c="#8a8ab0" s={7} /></More>
          </CmdBar>
          <SnapBar>
            {SNAP.map((n, i) => (n === 0 ? <HSep key={i} /> : <Btn key={i} $h={26} $on={n[1]}><I s={20}>{Snap[n[0]]}</I></Btn>))}
          </SnapBar>
        </RightBars>
      </Workspace>

      <PaletteRow>
        <Swatches>
          <NoneSwatch><I s={14} v={14}><rect width="14" height="14" fill="#fff" /><path d="M0 0l14 14M14 0L0 14" stroke="#8a2020" strokeWidth="1.200" /></I></NoneSwatch>
          {P.map((c, i) => <Swatch key={i} $c={c} />)}
        </Swatches>
        <PaletteMenu><I s={6} v={6}><path d="M5 0v8L1 4z" fill="#000" /></I></PaletteMenu>
      </PaletteRow>
      <PaletteScroll>
        <Arrow $w={13}><Chev d="left" c="#aaa" /></Arrow>
        <HThumb $w={329} $l={0} />
        <Arrow $l={1067}><Chev d="right" c="#555" /></Arrow>
      </PaletteScroll>

      <Status>
        <FillInfo>
          <span>Wypełnienie:</span><FirstValue>Różne</FirstValue>
          <span>Kontur:</span><span>Różne 0,265</span>
        </FillInfo>
        <OpacityLabel>K:</OpacityLabel>
        <NumField $w={37} $h={21} $open> 0</NumField>
        <Spin $h={21}><SpinPart $dim><Tri up c="#888" /></SpinPart><SpinPart><Tri /></SpinPart></Spin>
        <StatusSep />
        <StatusIcon $w={21}><I s={12} v={12}><path d="M1 6c3-5 7-5 10 0-3 4-7 4-10 0z" fill="#999" stroke="#222" /><circle cx="6" cy="5.500" r="2" fill="#111" /><path d="M2 3l1 1M6 1v2M10 3l-1 1" stroke="#222" /></I></StatusIcon>
        <StatusIcon $w={17}><Lock c="#999" /></StatusIcon>
        <Gap $w={1} />
        <LayerBox>▪Layer 1</LayerBox>
        <ComboArrow $w={17} $h={28}><Chev d="down" c="#666" /></ComboArrow>
        <Message>Wstawia tekst na ścieżkę</Message>
        <Coords>
          <CoordRow><CoordKey>X:</CoordKey><CoordVal>-381,25</CoordVal></CoordRow>
          <CoordRow><CoordKey>Y:</CoordKey><CoordVal> 587,50</CoordVal></CoordRow>
        </Coords>
        <ZoomLabel>Z:</ZoomLabel>
        <NumField $w={45} $h={21} $center>64%</NumField>
        <Gap $w={1} />
        <Spin $w={9} $h={21}><SpinPart><Tri up /></SpinPart><SpinPart><Tri /></SpinPart></Spin>
        <EndPad />
      </Status>

      <Taskbar>
        <TaskBtn><I s={18} v={18}>{Art.win}</I></TaskBtn>
        <TaskBtn><I s={17} v={17}>{Art.task}</I></TaskBtn>
        <TaskBtn $ml={3}><I s={24} v={24}>{Art.edge}</I></TaskBtn>
        <TaskBtn $ml={1} $run><I s={24} v={24}>{Art.folder}</I></TaskBtn>
        <TaskBtn $ml={1}><I s={24} v={24}>{Art.store}</I></TaskBtn>
        <TaskBtn $ml={1}><I s={24} v={24}>{Art.mail}</I></TaskBtn>
        <TaskBtn $ml={1} $run><I s={24} v={24}>{Art.fox}</I></TaskBtn>
        <TaskBtn $ml={1} $run $active><I s={26} v={24}>{InkPaths}</I></TaskBtn>
        <Tray>
          <TrayItem $w={48}><I s={14} v={14}><path d="M1 10l6-6 6 6" fill="none" stroke="#eee" strokeWidth="1.200" /></I></TrayItem>
          <Gap $w={4} />
          <TrayItem $w={40}><I s={18} v={18}><path d="M5 3h12v10H7M1 2h6v6H1zM11 13v3M7 16h8" fill="none" stroke="#eee" /></I></TrayItem>
          <TrayItem $w={20}>POL</TrayItem>
          <Clock><span>10:21</span><span>21.09.2021</span></Clock>
          <TrayItem $w={26}><I s={24} v={24}><path d="M2 3h16v12H2z" fill="#fff" /><path d="M5 6h10M5 9h10" stroke="#282627" /><circle cx="15" cy="16" r="7" fill="#3a3839" stroke="#bbb" strokeWidth="1.300" /><text x="15" y="20" textAnchor="middle" fontFamily={SANS} fontSize="11" fill="#fff">1</text></I></TrayItem>
          <Gap $w={19} />
        </Tray>
      </Taskbar>

      <DropMenu>
        <Row h={20} k="Shift+Ctrl+T" icon={<I s={16} v={16}><text x="8" y="14" textAnchor="middle" fontFamily={SERIF} fontWeight="700" fontSize="18" fill="#111">T</text></I>}><u>T</u>ekst i czcionka...</Row>
        <Row h={20}>Edytor <u>c</u>zcionek SVG...</Row>
        <Row h={20} icon={<I s={15} v={16}><rect x="1" y="3" width="12" height="11" fill="#e8e8e8" stroke="#aaa" /><text x="9" y="10" textAnchor="middle" fontFamily={SANS} fontWeight="700" fontSize="8" fill="#333">b</text></I>}>Glify...</Row>
        <MenuSep $h={9} />
        <Row hot icon={<Scis />}><u>W</u>staw na ścieżkę</Row>
        <Row icon={<Scis x />}><u>Z</u>dejmij ze ścieżki</Row>
        <MenuSep $h={8} />
        <Row k="Alt+W" icon={<TIcon c="#444"><path d="M11 12h4M13 10v4" stroke="#111" /></TIcon>}>W<u>p</u>rowadź tekst do kształtu</Row>
        <Row k="Shift+Alt+W" icon={<TIcon c="#b03030">{RedX}</TIcon>}><u>U</u>wolnij tekst</Row>
        <Row icon={<I s={16} v={16}><rect x="1" y="2" width="8" height="8" fill="#bbb" stroke="#444" /><text x="5" y="9" textAnchor="middle" fontFamily={SERIF} fontWeight="700" fontSize="9" fill="#111">T</text><text x="12" y="14" textAnchor="middle" fontFamily={SERIF} fontWeight="700" fontSize="9" fill="#111">T</text></I>}><u>K</u>onwertuj na zwykły tekst</Row>
        <MenuSep $h={8} />
        <Row icon={<TIcon c="#4a9a50">{RedX}</TIcon>}>Usuń ręczne po<u>d</u>cięcie</Row>
        <MenuSep $h={8} />
        <Row k="Ctrl+Alt+K" icon={<I s={16} v={16}><text x="7" y="8" textAnchor="middle" fontFamily={SANS} fontWeight="700" fontSize="8" fill="#444">AB</text><path d="M3 9l4 5 6-6-6 3z" fill="#5da83a" stroke="#3d7a20" /></I>}><u>S</u>prawdź pisownię...</Row>
      </DropMenu>
    </Window>
  );
}
